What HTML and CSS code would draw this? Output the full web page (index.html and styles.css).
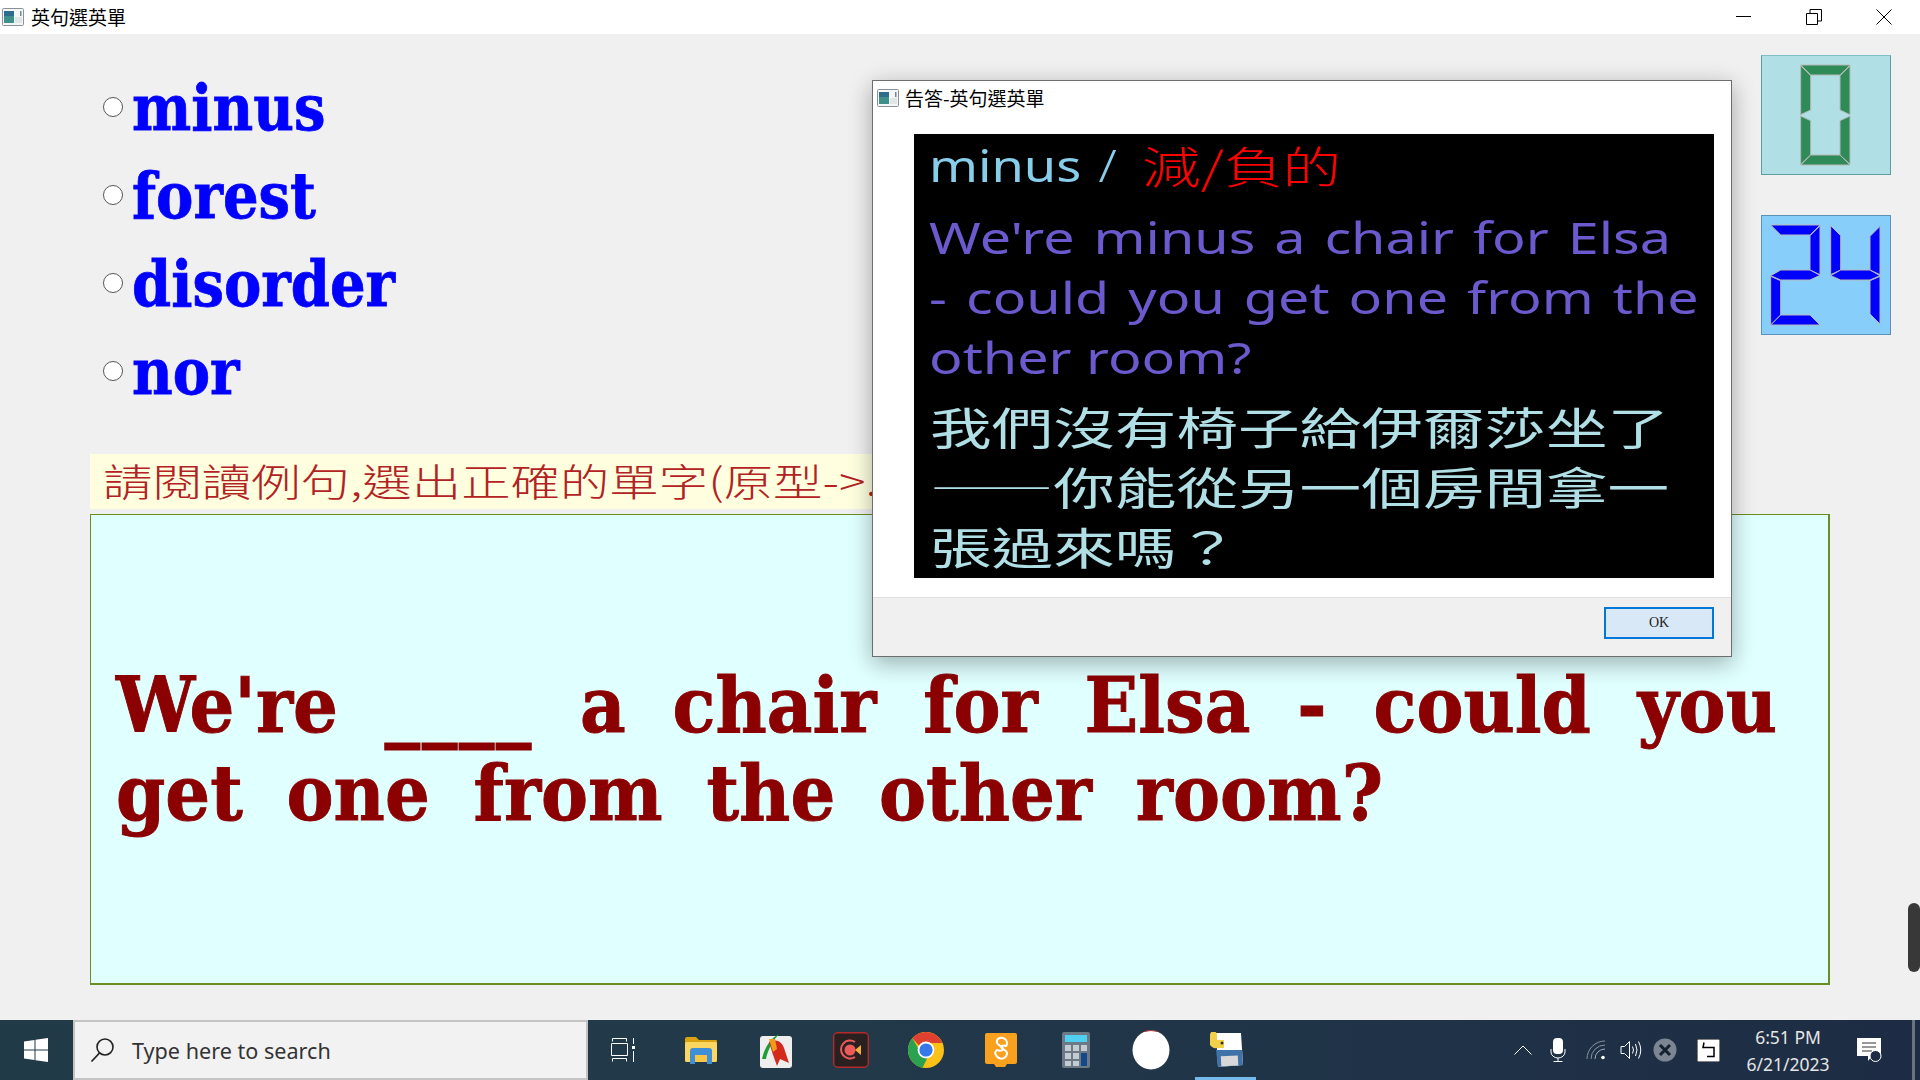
FILE: index.html
```html
<!DOCTYPE html>
<html lang="zh-Hant">
<head>
<meta charset="utf-8">
<title>英句選英單</title>
<link rel="stylesheet" href="styles.css">
</head>
<body>
<svg class="defs" width="0" height="0" aria-hidden="true">
  <defs>
    <g id="appicon">
      <rect x="0.5" y="0.5" width="21" height="17" rx="1" fill="#f4f6f6" stroke="#8a9299"/>
      <rect x="2" y="3" width="10" height="12" fill="#3f8f8a"/>
      <rect x="2" y="3" width="10" height="5" fill="#2f6c8c"/>
      <rect x="13" y="9" width="7" height="6" fill="#dfe6e4"/>
      <rect x="18" y="3" width="1.5" height="5" fill="#6f8a94"/>
    </g>
  </defs>
</svg>
<div class="window">
  <header class="titlebar">
    <svg class="app-icon" width="22" height="18" viewBox="0 0 22 18"><use href="#appicon"/></svg>
    <span class="title">英句選英單</span>
    <div class="controls">
      <svg width="16" height="16" viewBox="0 0 16 16"><path d="M0 7.5H15" stroke="#000" fill="none"/></svg>
      <svg width="16" height="16" viewBox="0 0 16 16"><path d="M0.5 4.5H11.5V15.5H0.5ZM4 4.5V0.5H15.5V12H11.5" stroke="#000" fill="none"/></svg>
      <svg width="16" height="16" viewBox="0 0 16 16"><path d="M0.5 0.5L15.5 15.5M15.5 0.5L0.5 15.5" stroke="#000" fill="none"/></svg>
    </div>
  </header>

  <main class="content">
    <div class="top">
      <div class="options">
        <label class="option"><input type="radio" name="w"><span class="word">minus</span></label>
        <label class="option"><input type="radio" name="w"><span class="word">forest</span></label>
        <label class="option"><input type="radio" name="w"><span class="word">disorder</span></label>
        <label class="option"><input type="radio" name="w"><span class="word">nor</span></label>
      </div>
      <div class="counters">
        <div class="counter counter-green">
          <svg class="lcd lcd-green" width="130" height="120" viewBox="0 0 390 360">
            <g transform="translate(-122,-163)">
              <polygon points="241,193 389,193 359,223 271,223"/>
              <polygon points="241,195 271,225 271,328 241,342"/>
              <polygon points="241,346 271,360 271,463 241,491"/>
              <polygon points="389,195 359,225 359,328 389,342"/>
              <polygon points="389,346 359,360 359,463 389,491"/>
              <polygon points="241,493 271,463 359,463 389,493"/>
            </g>
          </svg>
        </div>
        <div class="counter counter-blue">
          <svg class="lcd lcd-blue" width="130" height="120" viewBox="0 0 390 360">
            <g transform="translate(-122,-643)">
              <polygon points="151,673 299,673 269,703 181,703"/>
              <polygon points="299,675 299,822 269,808 269,705"/>
              <polygon points="151,825 181,808 269,808 299,824 269,838 181,838"/>
              <polygon points="151,827 181,840 181,943 151,973"/>
              <polygon points="151,973 181,943 269,943 299,973"/>
              <polygon points="331,675 361,705 361,808 331,822"/>
              <polygon points="331,825 361,808 449,808 479,825 449,838 361,838"/>
              <polygon points="479,677 479,822 449,808 449,707"/>
              <polygon points="449,840 479,827 479,970 449,940"/>
            </g>
          </svg>
        </div>
      </div>
    </div>

    <div class="hint"><span class="hint-text">請閱讀例句,選出正確的單字(原型-&gt;.</span></div>

    <section class="question">
      <p class="q-line q-line1">We're <span class="blank">____</span> a chair for Elsa - could you</p>
      <p class="q-line q-line2">get one from the other room?</p>
    </section>

    <div class="scroll-thumb"></div>

    <div class="dialog">
      <div class="d-title">
        <svg class="app-icon" width="22" height="18" viewBox="0 0 22 18"><use href="#appicon"/></svg>
        <span class="d-title-text">告答-英句選英單</span>
      </div>
      <div class="d-body">
        <div class="answer">
          <div class="a-head">
            <span class="a-word">minus <span class="a-slash">/</span></span>
            <span class="a-zh">減/負的</span>
          </div>
          <div class="a-en">
            <div class="a-en-line a-en1">We're minus a chair for Elsa</div>
            <div class="a-en-line a-en2">- could you get one from the</div>
            <div class="a-en-line a-en3">other room?</div>
          </div>
          <div class="a-cn">
            <div class="a-cn-line">我們沒有椅子給伊爾莎坐了</div>
            <div class="a-cn-line">——你能從另一個房間拿一</div>
            <div class="a-cn-line">張過來嗎&#xFF1F;</div>
          </div>
        </div>
      </div>
      <div class="d-foot"><button class="ok" type="button">OK</button></div>
    </div>
  </main>

  <footer class="taskbar">
    <div class="start">
      <svg width="24" height="24" viewBox="0 0 24 24"><path fill="#fff" d="M0 3.6L10.5 2V11.4H0ZM11.5 1.8L24 0V11.4H11.5ZM0 12.6H10.5V22L0 20.4ZM11.5 12.6H24V24L11.5 22.2Z"/></svg>
    </div>
    <div class="search">
      <svg width="26" height="26" viewBox="0 0 26 26"><circle cx="15" cy="10" r="8" fill="none" stroke="#222" stroke-width="1.6"/><path d="M9.5 16L1.5 24.5" stroke="#222" stroke-width="1.8" fill="none"/></svg>
      <span class="search-text">Type here to search</span>
    </div>
    <div class="apps">
      <div class="app app-taskview">
        <svg width="24" height="24" viewBox="0 0 24 24" fill="none" stroke="#fff"><path d="M1.5 3.5V0.5H15.5V3.5M0.5 5.5H16.5V17.5H0.5ZM1.5 23.5V20.5H15.5V23.5M22.5 0V6M22.5 13V24"/><rect x="21" y="8" width="3" height="3" fill="#fff" stroke="none"/></svg>
      </div>
      <div class="app">
        <svg width="34" height="28" viewBox="0 0 34 28"><path d="M1 3a2 2 0 0 1 2-2h9l3 3H32a1 1 0 0 1 1 1v4H1Z" fill="#d9a20e"/><rect x="1" y="6" width="32" height="20" rx="1.5" fill="#fbd661"/><path d="M6 28V15a3 3 0 0 1 3-3h16a3 3 0 0 1 3 3v13h-5V19H11v9Z" fill="#3f8fd6"/><rect x="11" y="19" width="12" height="7" fill="#f6c644"/></svg>
      </div>
      <div class="app">
        <svg width="34" height="36" viewBox="0 0 34 36"><rect x="1" y="4" width="32" height="32" rx="3" fill="#eee"/><path d="M3 27C6 14 12 6 20 2L15 8C10 16 8 22 7 27Z" fill="#1e9e34"/><path d="M10 10C18 6 23 10 25 16L30 31 21 27 18 34C15 26 12 17 10 10Z" fill="#d42a1e"/><path d="M10 7l6 0 2 10-4 3Z" fill="#f09a1a"/></svg>
      </div>
      <div class="app">
        <svg width="36" height="36" viewBox="0 0 36 36"><rect x="0.7" y="0.7" width="34.6" height="34.6" rx="4" fill="#2a2020" stroke="#b32a2a" stroke-width="1.4"/><path d="M22 10a9 9 0 1 0 0 15" fill="none" stroke="#ee5a5a" stroke-width="2"/><circle cx="17" cy="18" r="5.5" fill="#ee5a5a"/><path d="M22 18l6-5v10Z" fill="#f0b040"/></svg>
      </div>
      <div class="app">
        <svg width="36" height="36" viewBox="0 0 36 36"><circle cx="18" cy="18" r="18" fill="#fbc117"/><path d="M18 0A18 18 0 0 1 34.5 11H18A7 7 0 0 0 11.9 14.5L4.4 6.3A18 18 0 0 1 18 0Z" fill="#e0402f"/><path d="M4.4 6.3L12 19.5A7 7 0 0 0 20 24.7L14.5 35.7A18 18 0 0 1 4.4 6.3Z" fill="#2aa24f"/><circle cx="18" cy="18" r="8.4" fill="#fff"/><circle cx="18" cy="18" r="6.6" fill="#3478ea"/></svg>
      </div>
      <div class="app">
        <svg width="32" height="36" viewBox="0 0 32 36"><path d="M2 1H30a2 2 0 0 1 2 2V30a2 2 0 0 1-2 2H22l-2 3H11l-2-3H2a2 2 0 0 1-2-2V3a2 2 0 0 1 2-2Z" fill="#f9a11f"/><path d="M20 7c-5-3-9 0-8 4 .6 2.500 6 3 6 6 0 2-4 2-6 1-3 2-2 6 2 8s8-1 8-5c0-3-6-4-6-6 0-1 3-2 5-1 2-2 1-5-1-7Z" fill="none" stroke="#fff" stroke-width="2"/></svg>
      </div>
      <div class="app">
        <svg width="28" height="36" viewBox="0 0 28 36"><rect width="28" height="36" rx="2" fill="#6c7a86"/><rect x="3" y="3" width="22" height="7" fill="#4fd0f0"/><g fill="#c4ccd2"><rect x="3" y="13" width="6" height="6"/><rect x="11" y="13" width="6" height="6"/><rect x="19" y="13" width="6" height="6"/><rect x="3" y="21" width="6" height="6"/><rect x="11" y="21" width="6" height="6"/><rect x="3" y="29" width="6" height="5"/><rect x="11" y="29" width="6" height="5"/></g><rect x="19" y="21" width="6" height="13" fill="#14488a"/></svg>
      </div>
      <div class="app">
        <svg width="38" height="40" viewBox="0 0 38 40"><ellipse cx="19" cy="20" rx="18.500" ry="19.500" fill="#fff"/><path d="M12 1.500Q19 -0.500 26 1.500" stroke="#a33" fill="none"/></svg>
      </div>
      <div class="app app-active">
        <svg width="36" height="36" viewBox="0 0 36 36"><path d="M8 1L33 1 35 33 10 35Z" fill="#fff"/><path d="M8 18L34 18 35 33 10 35Z" fill="#3f72a8"/><rect x="13" y="24" width="17" height="10" fill="#d8d8d8" transform="rotate(-3 20 28)"/><path d="M2 3a3 3 0 0 1 7 0V8h7v8H9a7 7 0 0 1-7-3Z" fill="#f4cf4a"/><circle cx="14" cy="11" r="1.500" fill="#333"/></svg>
      </div>
    </div>
    <div class="tray">
      <svg class="t-chev" width="18" height="10" viewBox="0 0 18 10"><path d="M0.500 9.500L9 1L17.500 9.500" stroke="#fff" fill="none"/></svg>
      <svg class="t-mic" width="16" height="24" viewBox="0 0 16 24"><rect x="3" y="0" width="10" height="16" rx="4" fill="#fff"/><path d="M1 11v3a7 6 0 0 0 14 0v-3M8 20v3M3.500 23.500h9" stroke="#fff" fill="none"/></svg>
      <svg class="t-wifi" width="20" height="20" viewBox="0 0 20 20" fill="none" stroke="#8b93a0"><path d="M1 19A18 18 0 0 1 19 1M5 19A14 14 0 0 1 19 5"/><path d="M9 19A10 10 0 0 1 19 9" stroke="#a6adb8"/><circle cx="17" cy="17.500" r="1.800" fill="#fff" stroke="none"/></svg>
      <svg class="t-vol" width="23" height="20" viewBox="0 0 23 20" fill="none" stroke="#fff"><path d="M1 6.500H4.500L9.500 1.500V18.500L4.500 13.500H1ZM12.500 6.500Q14.500 10 12.500 13.500M15.500 4Q18.500 10 15.500 16M18.500 1.500Q23 10 18.500 18.500"/></svg>
      <svg class="t-x" width="24" height="24" viewBox="0 0 24 24"><circle cx="12" cy="12" r="11.500" fill="#7c8592"/><path d="M7 7L17 17M17 7L7 17" stroke="#14202e" stroke-width="3" fill="none"/></svg>
      <div class="t-ime">
        <svg width="23" height="23" viewBox="0 0 23 23"><rect width="23" height="23" fill="#fff" stroke="#000"/><path d="M7 3.500L6 8.500H17V17.500H10" stroke="#000" stroke-width="1.500" fill="none"/></svg>
      </div>
      <div class="clock"><span>6:51 PM</span><span>6/21/2023</span></div>
      <svg class="t-note" width="25" height="25" viewBox="0 0 25 25"><path d="M0 0H24V18H15L11 23V18H0Z" fill="#fff"/><path d="M5 5H19M5 9H19M5 13H15" stroke="#333" fill="none"/><circle cx="18.500" cy="18" r="5.500" fill="#1d2c44" stroke="#fff"/></svg>
      <div class="show-desktop"></div>
    </div>
  </footer>
</div>
</body>
</html>
```
FILE: styles.css
```css
* { box-sizing: border-box; }
html, body { margin: 0; height: 100%; }
body { background: #f0f0f0; font-family: "Noto Sans", "Noto Sans CJK TC", sans-serif; overflow: hidden; }
.defs { position: absolute; }
.window { width: 1920px; height: 1080px; display: flex; flex-direction: column; overflow: hidden; }

/* title bar */
.titlebar { height: 34px; background: #fff; display: flex; align-items: center; padding-left: 2px; flex: none; }
.title { margin-left: 7px; font-size: 19px; font-family: "Noto Sans CJK TC", sans-serif; color: #000; line-height: 1; position: relative; top: -1px; }
.controls { margin-left: auto; display: flex; align-items: center; gap: 54px; padding-right: 28px; }

/* content */
.content { position: relative; flex: 1; padding-left: 90px; padding-right: 29px; background: #f0f0f0; }
.top { display: flex; justify-content: space-between; align-items: flex-start; height: 420px; }
.options { display: flex; flex-direction: column; padding: 29px 0 0 13px; }
.option { display: flex; align-items: center; height: 88px; gap: 9px; }
.option input { appearance: none; margin: 0; width: 20px; height: 20px; border-radius: 50%; border: 1px solid #555; background: #fff; flex: none; }
.word { font-family: "DejaVu Serif", serif; font-weight: 700; font-size: 64px; line-height: 88px; color: #0000ff; display: block; transform: translateY(1px) scaleX(0.875); transform-origin: left center; -webkit-text-stroke: 0.8px #0000ff; }

.counters { display: flex; flex-direction: column; gap: 40px; padding-top: 21px; }
.counter { width: 130px; height: 120px; border: 1px solid #5f9ea0; border-top-color: #7fc0c8; position: relative; }
.counter-green { background: #b0e0e6; }
.counter-blue { background: #87cefa; border-color: #5a93b8; }
.lcd { position: absolute; left: -1px; top: -1px; }
.lcd polygon { stroke: #b8b8b8; stroke-width: 3; }
.lcd-green polygon { fill: #2e8b57; }
.lcd-blue polygon { fill: #0000ff; }

.hint { width: 960px; height: 55px; background: #ffffe0; display: flex; align-items: center; padding: 0 0 4px 13px; }
.hint-text { display: block; width: fit-content; white-space: nowrap; font-family: "Noto Sans CJK TC", sans-serif; font-weight: 300; font-size: 38px; line-height: 51px; color: #b22222; transform: scaleX(1.3); transform-origin: left center; }

.question { margin-top: 5px; width: 1740px; height: 471px; background: #e0ffff; border: 2px solid #6b8e23; border-width: 1px 2px 2px 1px; display: flex; flex-direction: column; justify-content: center; padding-left: 25px; }
.q-line { margin: 0; width: fit-content; white-space: nowrap; font-family: "DejaVu Serif", serif; font-weight: 700; font-size: 77px; line-height: 88px; color: #8b0000; transform: scaleX(0.916); transform-origin: left center; -webkit-text-stroke: 1px #8b0000; }
.q-line1 { word-spacing: 24.3px; }
.q-line2 { word-spacing: 21px; }
.blank { letter-spacing: 2px; }

.scroll-thumb { position: absolute; right: 0; top: 869px; width: 12px; height: 69px; border-radius: 6px; background: #383838; }

/* dialog */
.dialog { position: absolute; left: 872px; top: 46px; width: 860px; height: 577px; background: #fff; border: 1px solid #6e6e6e; display: flex; flex-direction: column; box-shadow: 0 6px 22px rgba(0,0,0,.32); }
.d-title { height: 33px; flex: none; display: flex; align-items: center; padding-left: 4px; }
.d-title-text { margin-left: 6px; font-size: 19px; font-family: "Noto Sans CJK TC", sans-serif; line-height: 1; color: #000; }
.d-body { flex: 1; padding: 20px 17px 0 41px; }
.answer { width: 800px; height: 444px; background: #000; padding-left: 15px; }
.a-head { display: flex; height: 61px; padding-top: 1px; }
.a-word { width: 213px; flex: none; font-size: 44px; line-height: 60px; color: #87ceeb; white-space: nowrap; transform: scaleX(1.19); transform-origin: left center; }
.a-slash { font-weight: 300; margin-left: 3px; }
.a-zh { font-family: "Noto Sans CJK TC", sans-serif; font-weight: 300; font-size: 44px; line-height: 60px; color: #ff0000; white-space: nowrap; transform: scaleX(1.335); transform-origin: left center; }
.a-en { margin-top: 12px; }
.a-en-line { width: fit-content; font-size: 44px; line-height: 60px; color: #6a5acd; white-space: nowrap; transform: scaleX(1.265); transform-origin: left center; }
.a-en1 { word-spacing: 3.5px; }
.a-en2 { word-spacing: 3.6px; }
.a-cn { margin-top: 9px; }
.a-cn-line { width: fit-content; margin-left: 1px; font-family: "Noto Sans CJK TC", sans-serif; font-size: 44px; line-height: 60px; color: #b0e0e6; white-space: nowrap; transform: scaleX(1.4); transform-origin: left center; }
.d-foot { height: 59px; flex: none; background: #f0f0f0; border-top: 1px solid #dfdfdf; display: flex; justify-content: flex-end; align-items: flex-start; padding: 9px 17px 0 0; }
.ok { width: 110px; height: 32px; padding: 0; background: #d9e8f6; border: 2px solid #0078d7; font-family: "Liberation Serif", serif; font-size: 14px; color: #222; }

/* taskbar */
.taskbar { height: 60px; flex: none; display: flex; align-items: stretch; background: linear-gradient(90deg, #213a47 0%, #22394a 45%, #1d2c44 100%); position: relative; }
.start { width: 73px; flex: none; display: flex; align-items: center; justify-content: center; padding-right: 2px; }
.search { width: 515px; flex: none; background: #f2f2f2; border: 2px solid #c4c4c4; display: flex; align-items: center; padding-left: 15px; gap: 16px; }
.search-text { font-size: 21.6px; color: #333; line-height: 1; padding-top: 2px; }
.apps { display: flex; align-items: center; }
.app { width: 75px; height: 60px; display: flex; align-items: center; justify-content: center; flex: none; position: relative; }
.app-taskview { padding-right: 5px; }
.app-active::after { content: ""; position: absolute; left: 7px; right: 7px; bottom: 0; height: 3px; background: #76b9ed; }
.tray { margin-left: auto; display: flex; align-items: center; color: #e6e6e6; position: relative; height: 60px; padding-right: 38px; }
.t-chev { margin-right: 18px; }
.t-mic { margin-right: 20px; }
.t-wifi { margin-right: 14px; }
.t-vol { margin-right: 10px; }
.t-x { margin-right: 20px; }
.t-ime { display: flex; margin-right: 13px; }
.clock { width: 110px; display: flex; flex-direction: column; align-items: center; gap: 7px; font-size: 17.5px; line-height: 20px; color: #e6e6e6; margin-right: 14px; }
.show-desktop { position: absolute; right: 5px; top: 0; width: 3px; height: 60px; background: #6a7280; }
```
